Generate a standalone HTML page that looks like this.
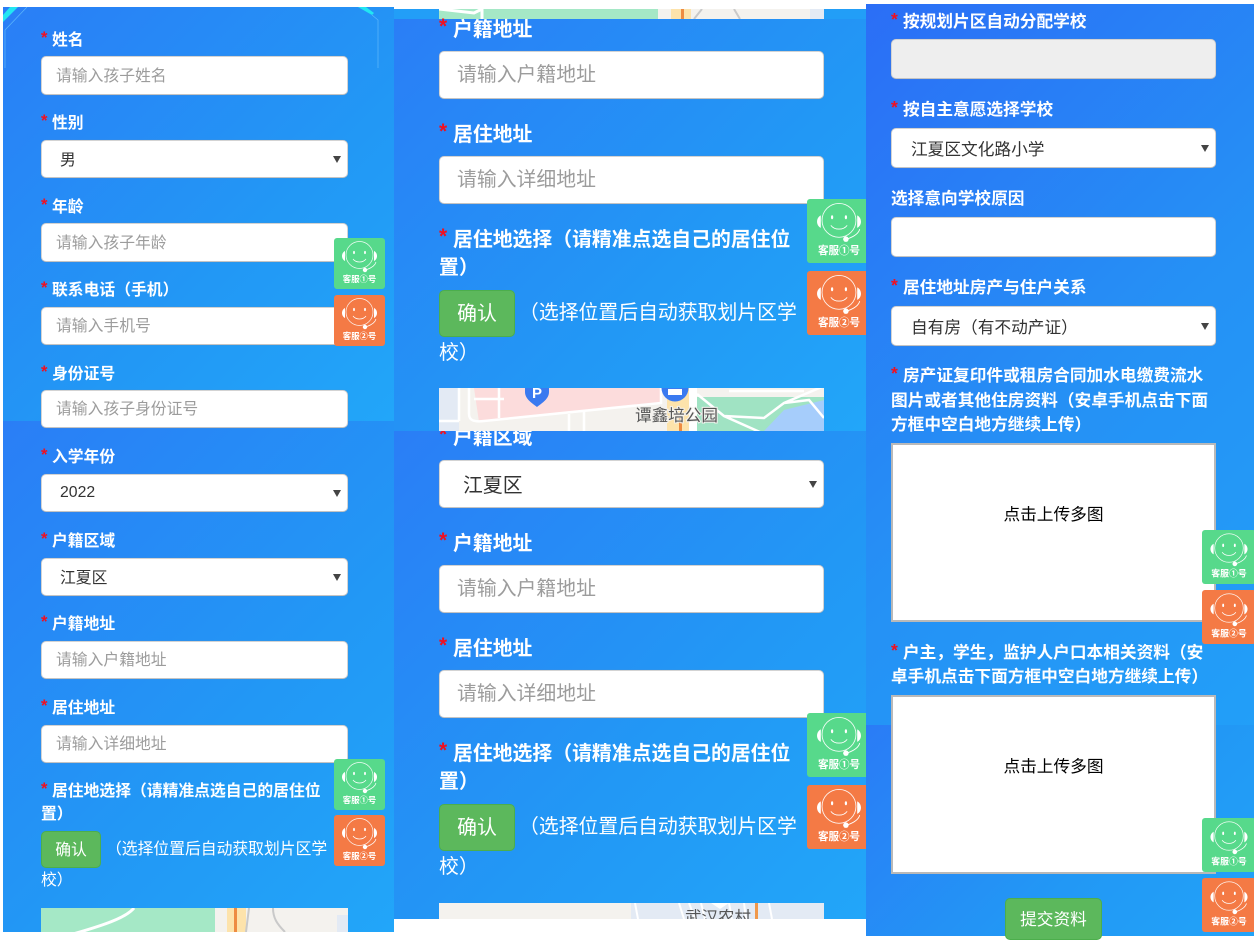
<!DOCTYPE html>
<html lang="zh"><head><meta charset="utf-8"><title>表单</title>
<style>
html,body{margin:0;padding:0;background:#fff}
body{width:1260px;height:936px;position:relative;overflow:hidden;font-family:"Liberation Sans","Noto Sans CJK SC",sans-serif;filter:blur(.3px)}
.p,.i,.l,.t,.b,.m,.ic,.x{position:absolute;box-sizing:border-box}
.p{background:linear-gradient(135deg,#2a7ef6 0%,#2298f5 60%,#22a6f9 100%)}
.i{background:#fff;border:1px solid #d3d3d3;border-bottom-color:#c4c4c4;border-radius:5px;color:#9c9c9c;white-space:nowrap;box-shadow:0 0 1px rgba(120,140,170,.7);display:flex;align-items:center}
.s{color:#333}
.s:after{content:"";position:absolute;right:6px;top:50%;margin-top:-3px;border:4px solid transparent;border-top:7px solid #444;border-bottom:0}
.l{color:#fff;font-weight:700;white-space:nowrap;line-height:24px;height:24px}
.l b{color:#f01020;position:absolute;top:-3px;font-family:"Liberation Sans",sans-serif;font-size:1.05em}
.t{color:#fff;white-space:nowrap;line-height:24px;height:24px}
.b{background:#5cb85c;border:1px solid #4cae4c;border-radius:5px;color:#fff;display:flex;align-items:center;justify-content:center}
.a{font-size:15.8px}.a .i{padding-left:14px;padding-bottom:3px}.a .s{padding-bottom:2px}.a .l{margin-top:2px}.a .b{padding-bottom:2px}
.c{font-size:19.85px}.c .i{padding-left:17px;padding-bottom:5px}.c .s{padding-bottom:2px}.c .l{margin-top:1px}.c .b{padding-bottom:4px}
.d{font-size:16.7px}.d .l{margin-top:1px}
.ic{border-radius:3px;display:block}
.g{background:#57d98b}.o{background:#f47a45}
.ic text{font:700 8.4px "Liberation Sans","Noto Sans CJK SC",sans-serif;fill:#fff;text-anchor:middle}
.up{background:#fff;border:2px solid #b9b9b9;color:#000;display:flex;align-items:center;justify-content:center;padding-bottom:39px;font-size:16.7px}
.m{overflow:hidden}
</style></head><body>
<svg width="0" height="0" style="position:absolute"><defs><symbol id="f" viewBox="0 0 51 51">
<circle cx="25.5" cy="17" r="13.500" fill="none" stroke="#fff" stroke-width=".7" opacity=".9"/>
<path d="M11 13c-2 1-3 3-3 5s1 4 3 5zM40 13c2 1 3 3 3 5s-1 4-3 5z" fill="#fff"/>
<ellipse cx="20" cy="14.500" rx=".9" ry="1.600" fill="#fff"/><ellipse cx="31" cy="14.500" rx=".9" ry="1.600" fill="#fff"/>
<path d="M19 21c3 4 10 4 13 0" fill="none" stroke="#fff" stroke-width=".7"/>
<path d="M42 24c-1 4-5 6-9 7.500" fill="none" stroke="#fff" stroke-width=".7"/>
<circle cx="31" cy="32" r="2.200" fill="#fff"/></symbol></defs></svg>

<!-- column 1 -->
<div class="p" style="left:3px;top:7px;width:391px;height:414px"></div>
<div class="p" style="left:3px;top:421px;width:391px;height:511px"></div>
<svg class="x" style="left:3px;top:7px" width="391" height="70"><path d="M0 8 7 0 15 0 0 15z" fill="#22e6f2"/><path d="M2 61V23L24 0M369 8 375 13V61" stroke="#5fb8fb" stroke-width=".7" fill="none"/><path d="M355 0h8l8 6-2 2z" fill="#22e6f2"/></svg>

<div class="a">
<div class="l" style="left:41px;top:27px"><b>*</b><span style="margin-left:11px">姓名</span></div>
<div class="i" style="left:41px;top:56px;width:307px;height:39px">请输入孩子姓名</div>
<div class="l" style="left:41px;top:110px"><b>*</b><span style="margin-left:11px">性别</span></div>
<div class="i s" style="left:41px;top:140px;width:307px;height:38px;padding-left:18px">男</div>
<div class="l" style="left:41px;top:194px"><b>*</b><span style="margin-left:11px">年龄</span></div>
<div class="i" style="left:41px;top:223px;width:307px;height:39px">请输入孩子年龄</div>
<div class="l" style="left:41px;top:277px"><b>*</b><span style="margin-left:11px">联系电话（手机）</span></div>
<div class="i" style="left:41px;top:307px;width:307px;height:38px">请输入手机号</div>
<div class="l" style="left:41px;top:361px"><b>*</b><span style="margin-left:11px">身份证号</span></div>
<div class="i" style="left:41px;top:390px;width:307px;height:38px">请输入孩子身份证号</div>
<div class="l" style="left:41px;top:444px"><b>*</b><span style="margin-left:11px">入学年份</span></div>
<div class="i s" style="left:41px;top:474px;width:307px;height:38px;padding-left:18px;padding-bottom:0">2022</div>
<div class="l" style="left:41px;top:528px"><b>*</b><span style="margin-left:11px">户籍区域</span></div>
<div class="i s" style="left:41px;top:558px;width:307px;height:38px;padding-left:18px">江夏区</div>
<div class="l" style="left:41px;top:611px"><b>*</b><span style="margin-left:11px">户籍地址</span></div>
<div class="i" style="left:41px;top:641px;width:307px;height:38px">请输入户籍地址</div>
<div class="l" style="left:41px;top:695px"><b>*</b><span style="margin-left:11px">居住地址</span></div>
<div class="i" style="left:41px;top:725px;width:307px;height:38px">请输入详细地址</div>
<div class="l" style="left:41px;top:778px"><b>*</b><span style="margin-left:11px">居住地选择（请精准点选自己的居住位</span></div>
<div class="l" style="left:41px;top:801px">置）</div>
<div class="b" style="left:41px;top:831px;width:60px;height:37px">确认</div>
<div class="t" style="left:106px;top:838px">（选择位置后自动获取划片区学</div>
<div class="t" style="left:41px;top:869px">校）</div>
</div>
<svg class="m" style="left:41px;top:908px" width="307" height="24"><rect width="307" height="24" fill="#f4f2ee"/><rect width="174" height="24" fill="#a5e8c6"/><path d="M32 26C60 18 85 10 93 0" fill="none" stroke="#fff" stroke-width="3"/><rect x="186" width="19" height="24" fill="#fde3ab"/><rect x="193" width="3" height="24" fill="#ee8c42"/><path d="M208 0 205 24M232 0c0 10 4 16 12 24" fill="none" stroke="#c9c9c9" stroke-width="2"/><rect x="296" y="7" width="11" height="17" fill="#e3eaf4"/></svg>

<svg class="ic g" viewBox="0 0 51 51" style="left:334px;top:238px;width:51px;height:51px"><use href="#f"/><text x="25.5" y="44">客服①号</text></svg>
<svg class="ic o" viewBox="0 0 51 51" style="left:334px;top:295px;width:51px;height:51px"><use href="#f"/><text x="25.5" y="44">客服②号</text></svg>
<svg class="ic g" viewBox="0 0 51 51" style="left:334px;top:759px;width:51px;height:51px"><use href="#f"/><text x="25.5" y="44">客服①号</text></svg>
<svg class="ic o" viewBox="0 0 51 51" style="left:334px;top:815px;width:51px;height:51px"><use href="#f"/><text x="25.5" y="44">客服②号</text></svg>

<!-- column 2 -->
<div class="p" style="left:394px;top:9px;width:472px;height:10px;background:#229ef7"></div>
<div class="p" style="left:394px;top:19px;width:472px;height:412px"></div>
<div class="p" style="left:394px;top:431px;width:472px;height:488px"></div>
<svg class="m" style="left:439px;top:9px" width="385" height="10"><rect width="385" height="10" fill="#f4f2ee"/><rect width="219" height="10" fill="#a5e8c6"/><path d="M0 0 35 4 43 0M43 0V10" fill="none" stroke="#fff" stroke-width="3"/><rect x="232" width="20" height="10" fill="#fde3ab"/><rect x="242" width="3" height="10" fill="#ee8c42"/><path d="M255 10 263 0M295 0 301 10" fill="none" stroke="#c9c9c9" stroke-width="2"/><rect x="371" width="14" height="10" fill="#e3eaf4"/></svg>
<svg class="m" style="left:439px;top:388px" width="385" height="43"><rect width="385" height="43" fill="#f4f2ee"/><rect width="20" height="43" fill="#e3eaf4"/><path d="M35 0H221V15L40 34z" fill="#fcdcdc"/><path d="M30 0V26C30 33 36 34 45 33L222 15V0M60 0V30M35 11H65M130 26V43M145 24V43" fill="none" stroke="#fff" stroke-width="2.500"/><path d="M0 33H20M20 0V33" fill="none" stroke="#fff" stroke-width="2.500"/><rect x="228" width="22" height="43" fill="#fde3ab"/><rect x="240" y="25" width="3" height="18" fill="#ee8c42"/><rect x="250" width="8" height="43" fill="#fff"/><path d="M258 9H385V43H258z" fill="#a0e3c3"/><path d="M325 43 345 22 385 12V43z" fill="#a6cdfb"/><path d="M258 6 285 28 323 45M285 28 325 30 345 15 385-2M345 15 370 12 385 30M290 3H365" fill="none" stroke="#fff" stroke-width="2.500"/><path d="M86 0H110V4C110 11 103 15 98 19 93 15 86 11 86 4z" fill="#3a7af0"/><text x="98" y="10" font-family="Liberation Sans" font-size="15" font-weight="700" fill="#fff" text-anchor="middle">P</text><circle cx="236" cy="0" r="13.500" fill="#3a7af0"/><rect x="229" y="1" width="14" height="6" fill="#fff"/><text x="196" y="33" font-family="Liberation Sans,Noto Sans CJK SC,sans-serif" font-size="16.600" fill="#555" stroke="#f4f2ee" stroke-width="2" paint-order="stroke">谭鑫培公园</text></svg>
<div class="c">
<div class="l" style="left:439px;top:17px"><b>*</b><span style="margin-left:14px">户籍地址</span></div>
<div class="i" style="left:439px;top:51px;width:385px;height:48px">请输入户籍地址</div>
<div class="l" style="left:439px;top:122px"><b>*</b><span style="margin-left:14px">居住地址</span></div>
<div class="i" style="left:439px;top:156px;width:385px;height:48px">请输入详细地址</div>
<div class="l" style="left:439px;top:227px"><b>*</b><span style="margin-left:14px">居住地选择（请精准点选自己的居住位</span></div>
<div class="l" style="left:439px;top:255px">置）</div>
<div class="b" style="left:439px;top:290px;width:76px;height:47px">确认</div>
<div class="t" style="left:519px;top:301px">（选择位置后自动获取划片区学</div>
<div class="t" style="left:439px;top:341px">校）</div>
<div class="m" style="left:439px;top:431px;width:385px;height:20px;overflow:hidden"><div class="l" style="left:0;top:-6px"><b>*</b><span style="margin-left:14px">户籍区域</span></div></div>
<div class="i s" style="left:439px;top:460px;width:385px;height:48px;padding-left:23px">江夏区</div>
<div class="l" style="left:439px;top:531px"><b>*</b><span style="margin-left:14px">户籍地址</span></div>
<div class="i" style="left:439px;top:565px;width:385px;height:48px">请输入户籍地址</div>
<div class="l" style="left:439px;top:636px"><b>*</b><span style="margin-left:14px">居住地址</span></div>
<div class="i" style="left:439px;top:670px;width:385px;height:48px">请输入详细地址</div>
<div class="l" style="left:439px;top:741px"><b>*</b><span style="margin-left:14px">居住地选择（请精准点选自己的居住位</span></div>
<div class="l" style="left:439px;top:769px">置）</div>
<div class="b" style="left:439px;top:804px;width:76px;height:47px">确认</div>
<div class="t" style="left:519px;top:815px">（选择位置后自动获取划片区学</div>
<div class="t" style="left:439px;top:855px">校）</div>
</div>
<svg class="m" style="left:439px;top:903px" width="385" height="16"><rect width="385" height="16" fill="#f4f2ee"/><rect x="192" width="193" height="16" fill="#e3eaf4"/><path d="M196 0 199 16M240 0 245 16M250 0 256 16M262 0 266 16M290 0 293 16M305 0 307 16M330 0 333 16" stroke="#fff" stroke-width="2" fill="none"/><rect x="316" width="3" height="16" fill="#f0984a"/><path d="M272 0H290L281 6z" fill="#fff"/><text x="246" y="20" font-family="Liberation Sans,Noto Sans CJK SC,sans-serif" font-size="16.500" fill="#555">武汉农村</text></svg>
<svg class="ic g" viewBox="0 0 51 51" style="left:807px;top:199px;width:64px;height:64px"><use href="#f"/><text x="25.5" y="44">客服①号</text></svg>
<svg class="ic o" viewBox="0 0 51 51" style="left:807px;top:271px;width:64px;height:64px"><use href="#f"/><text x="25.5" y="44">客服②号</text></svg>
<svg class="ic g" viewBox="0 0 51 51" style="left:807px;top:713px;width:64px;height:64px"><use href="#f"/><text x="25.5" y="44">客服①号</text></svg>
<svg class="ic o" viewBox="0 0 51 51" style="left:807px;top:785px;width:64px;height:64px"><use href="#f"/><text x="25.5" y="44">客服②号</text></svg>

<!-- column 3 -->
<div class="p" style="left:866px;top:4px;width:388px;height:721px;background:linear-gradient(135deg,#2b6ef6 0%,#2591f5 55%,#229ff8 100%)"></div>
<div class="p" style="left:866px;top:725px;width:388px;height:211px;background:linear-gradient(135deg,#2a7cf6 0%,#2298f5 60%,#22a3f8 100%)"></div>
<div class="d">
<div class="l" style="left:891px;top:9px"><b>*</b><span style="margin-left:12px">按规划片区自动分配学校</span></div>
<div class="i" style="left:891px;top:39px;width:325px;height:40px;background:#eee"></div>
<div class="l" style="left:891px;top:97px"><b>*</b><span style="margin-left:12px">按自主意愿选择学校</span></div>
<div class="i s" style="left:891px;top:128px;width:325px;height:40px;padding-left:19px">江夏区文化路小学</div>
<div class="l" style="left:891px;top:186px">选择意向学校原因</div>
<div class="i" style="left:891px;top:217px;width:325px;height:40px"></div>
<div class="l" style="left:891px;top:275px"><b>*</b><span style="margin-left:12px">居住地址房产与住户关系</span></div>
<div class="i s" style="left:891px;top:306px;width:325px;height:40px;padding-left:19px">自有房（有不动产证）</div>
<div class="l" style="left:891px;top:363px"><b>*</b><span style="margin-left:12px">房产证复印件或租房合同加水电缴费流水</span></div>
<div class="l" style="left:891px;top:388px">图片或者其他住房资料（安卓手机点击下面</div>
<div class="l" style="left:891px;top:412px">方框中空白地方继续上传）</div>
<div class="x up" style="left:891px;top:443px;width:325px;height:179px">点击上传多图</div>
<div class="l" style="left:891px;top:640px"><b>*</b><span style="margin-left:12px">户主，学生，监护人户口本相关资料（安</span></div>
<div class="l" style="left:891px;top:664px">卓手机点击下面方框中空白地方继续上传）</div>
<div class="x up" style="left:891px;top:695px;width:325px;height:179px">点击上传多图</div>
<div class="b" style="left:1005px;top:898px;width:97px;height:42px;padding-bottom:3px">提交资料</div>
</div>
<svg class="ic g" viewBox="0 0 51 51" style="left:1202px;top:530px;width:54px;height:54px"><use href="#f"/><text x="25.5" y="44">客服①号</text></svg>
<svg class="ic o" viewBox="0 0 51 51" style="left:1202px;top:590px;width:54px;height:54px"><use href="#f"/><text x="25.5" y="44">客服②号</text></svg>
<svg class="ic g" viewBox="0 0 51 51" style="left:1202px;top:818px;width:54px;height:54px"><use href="#f"/><text x="25.5" y="44">客服①号</text></svg>
<svg class="ic o" viewBox="0 0 51 51" style="left:1202px;top:878px;width:54px;height:54px"><use href="#f"/><text x="25.5" y="44">客服②号</text></svg>
<div class="x" style="left:1254px;top:0;width:6px;height:936px;background:#fff"></div>
</body></html>
